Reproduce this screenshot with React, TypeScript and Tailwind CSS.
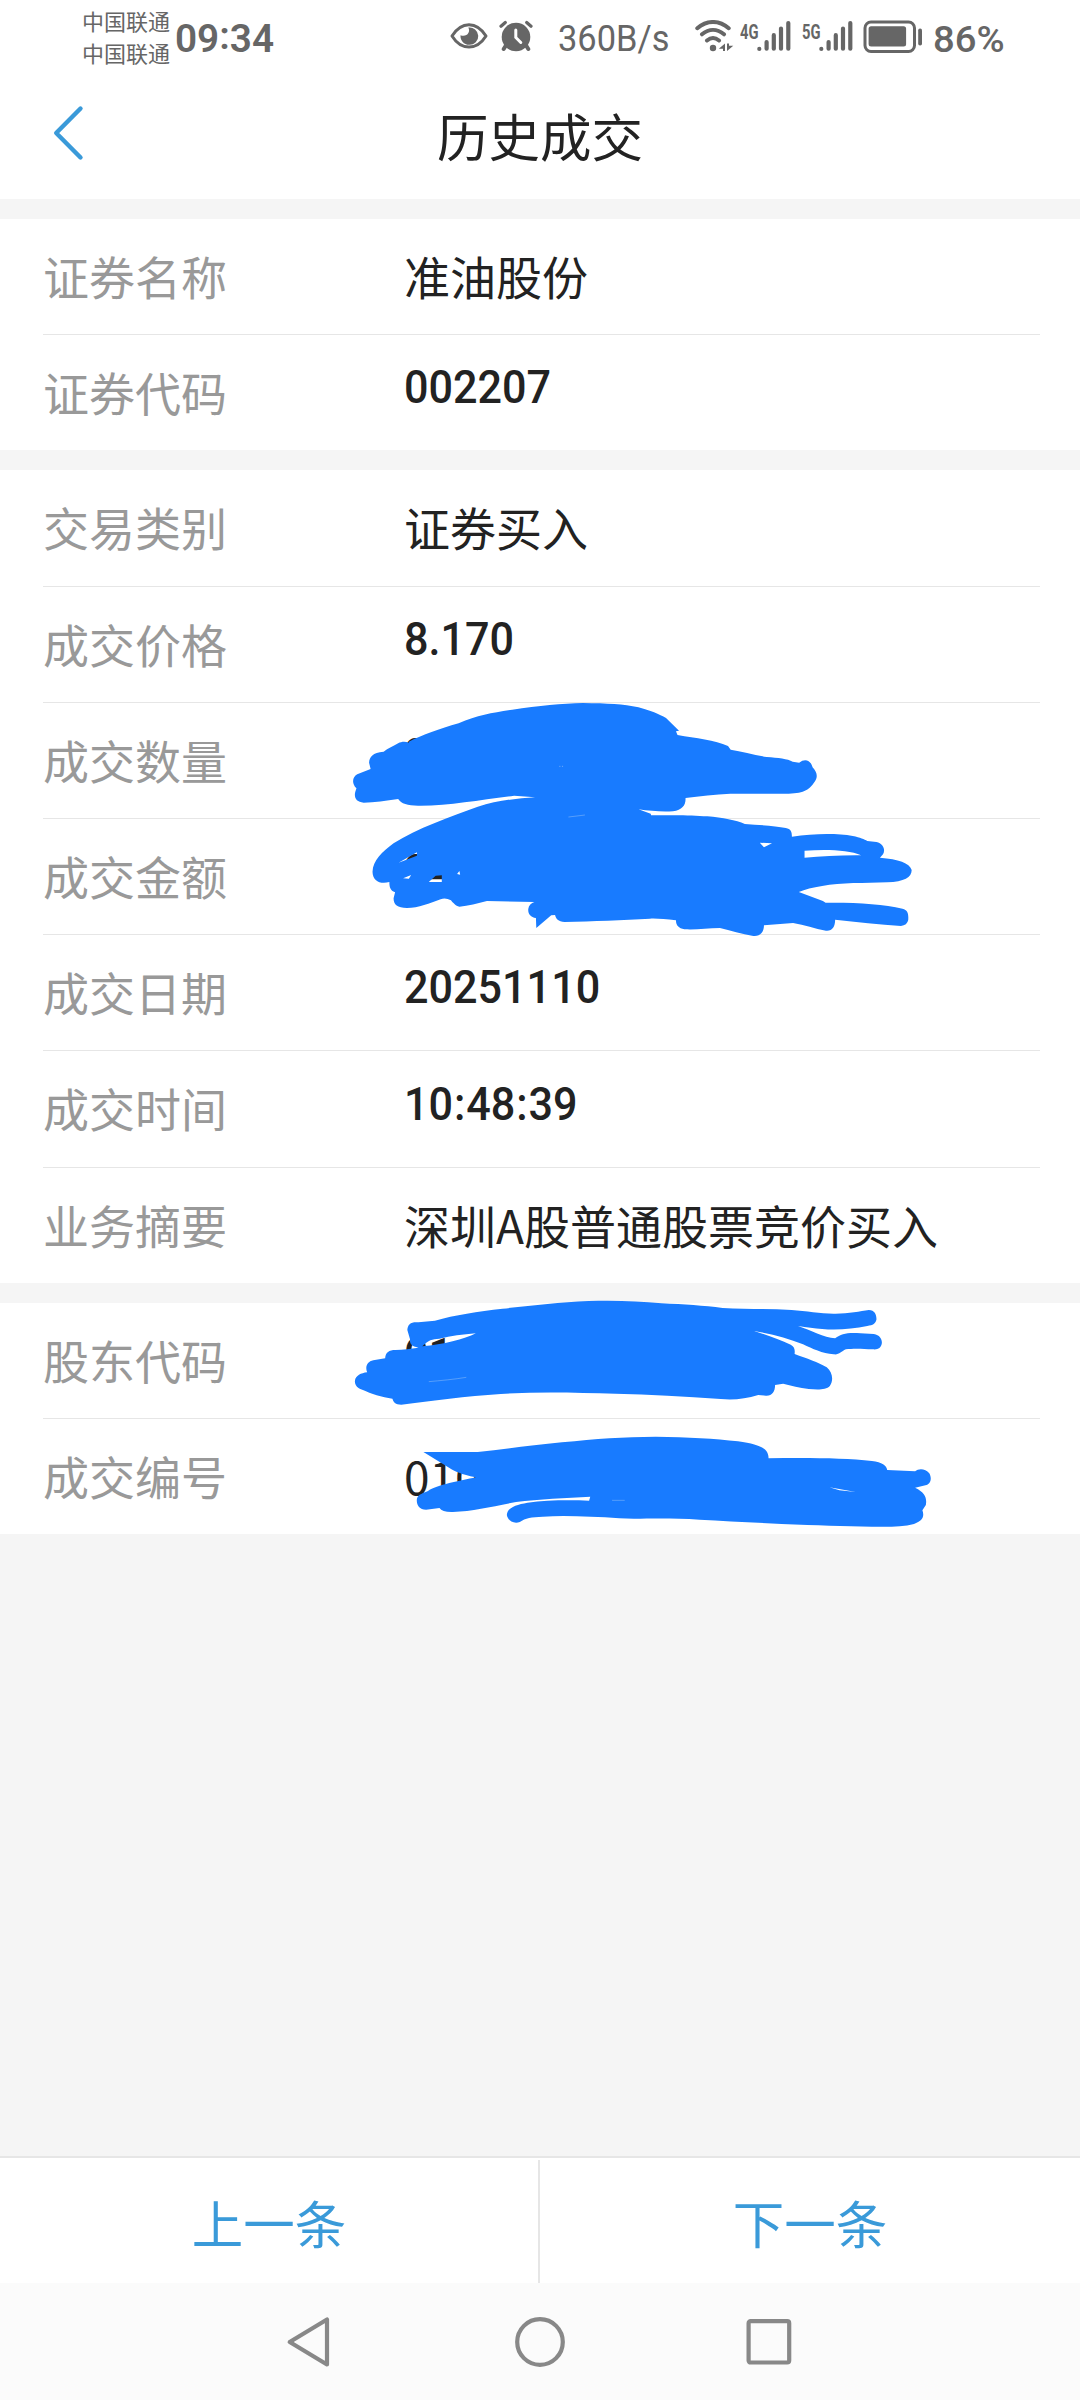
import type { ReactNode } from "react";

type RowData = {
  label: string;
  value: string;
  numeric?: boolean;
  height: string;
};

const security: RowData[] = [
  { label: "证券名称", value: "准油股份", height: "h-[116px]" },
  { label: "证券代码", value: "002207", numeric: true, height: "h-[115px]" },
];

const trade: RowData[] = [
  { label: "交易类别", value: "证券买入", height: "h-[117px]" },
  { label: "成交价格", value: "8.170", numeric: true, height: "h-[116px]" },
  { label: "成交数量", value: "2", numeric: true, height: "h-[116px]" },
  { label: "成交金额", value: "24", numeric: true, height: "h-[116px]" },
  { label: "成交日期", value: "20251110", numeric: true, height: "h-[116px]" },
  { label: "成交时间", value: "10:48:39", numeric: true, height: "h-[117px]" },
  { label: "业务摘要", value: "深圳A股普通股票竞价买入", height: "h-[115px]" },
];

const account: RowData[] = [
  { label: "股东代码", value: "01", numeric: true, height: "h-[116px]" },
  { label: "成交编号", value: "010", height: "h-[115px]" },
];

function Row({ row, last }: { row: RowData; last: boolean }) {
  return (
    <div
      className={`mr-[40px] ml-[43px] flex items-center pb-[4px] text-[46px] leading-none whitespace-nowrap ${row.height} ${
        last ? "" : "border-b border-[#e6e6e6]"
      }`}
    >
      <span className="w-[361px] shrink-0 text-[#999999]">{row.label}</span>
      {row.numeric ? (
        <span className="mb-[6px] inline-block origin-left scale-x-[0.93] font-[Roboto] text-[46.4px] font-medium text-[#222222]">
          {row.value.split(":").map((part, i) => (
            <span key={i}>
              {i > 0 && <span className="mx-[1px]">:</span>}
              {part}
            </span>
          ))}
        </span>
      ) : (
        <span className="text-[#222222]">{row.value}</span>
      )}
    </div>
  );
}

function Group({ rows }: { rows: RowData[] }) {
  return (
    <section className="bg-white">
      {rows.map((row, i) => (
        <Row key={row.label} row={row} last={i === rows.length - 1} />
      ))}
    </section>
  );
}

function SignalBars() {
  return (
    <svg className="h-[32px] w-[34px]" viewBox="0 0 34 32" stroke="#666" strokeWidth="4.2" strokeLinecap="round">
      <path d="M2.3 28.9v.01M9.6 22v6.7M16.8 15.2v13.5M24 8.6v20.1M31.3 3v25.7" />
    </svg>
  );
}

function Network({ name, children }: { name: string; children: ReactNode }) {
  return (
    <div className="flex h-[32px]">
      <span className="w-[17px]">
        <span className="inline-block origin-left scale-x-[0.72] font-[Roboto] text-[20.5px] leading-[15px] font-bold">
          {name}
        </span>
      </span>
      {children}
    </div>
  );
}

function StatusBar() {
  return (
    <header className="flex h-[80px] items-start text-[#666666]">
      <div className="ml-[82px] w-[93px] pt-[4px] text-[22px] leading-[32px] font-normal whitespace-nowrap">
        <div>中国联通</div>
        <div>中国联通</div>
      </div>
      <div className="w-[275px] pt-[15px]">
        <span className="inline-block origin-left scale-x-[0.98] font-[Roboto] text-[39.5px] leading-[48px] font-semibold">
          09<span className="relative -top-[3px]">:</span>34
        </span>
      </div>
      <svg className="mt-[20px] h-[32px] w-[38px]" viewBox="0 0 38 32" fill="none">
        <path d="M2 16C7 8 13 4.700 19 4.700S31 8 36 16C31 24 25 27 19 27S7 24 2 16Z" stroke="#666" strokeWidth="3" strokeLinejoin="round" />
        <path d="M18.300 7.500c2.600 4.500-1.500 10-7.800 7.700-.4 5.300 3.500 9.600 8.700 9.600a8.700 8.700 0 1 0-.9-17.300Z" fill="#666" />
      </svg>
      <svg className="mt-[20px] ml-[11px] h-[32px] w-[35px]" viewBox="0 0 35 32" fill="none">
        <path d="M7.500 24.500 4.700 29M26.500 24.500l2.800 4.500" stroke="#666" strokeWidth="4" strokeLinecap="round" />
        <circle cx="17" cy="17" r="14.300" fill="#666" />
        <path d="M2 6.200 6.300 2.500M32 6.200l-4.300-3.700" stroke="#666" strokeWidth="3.200" strokeLinecap="round" />
        <path d="M16.800 10v7.500l5 5" stroke="#fff" strokeWidth="3" strokeLinecap="round" />
      </svg>
      <div className="ml-[24px] w-[137px] pt-[15px]">
        <span className="inline-block origin-left scale-x-[0.93] font-[Roboto] text-[37px] leading-[48px] whitespace-nowrap">
          360B/s
        </span>
      </div>
      <svg className="mt-[20px] h-[32px] w-[39px]" viewBox="0 0 39 32" fill="none" stroke="#666" strokeLinecap="round">
        <path d="M2.300 8.200C12-.1 24-.1 33.700 8.200M7 14.300c7-5.800 15-5.800 22 0M12 20.500c4-3.300 8-3.300 12 0" strokeWidth="4" />
        <circle cx="18" cy="28" r="3.200" fill="#666" stroke="none" />
        <path d="M30 23.500v7.500h-2v-2.300h-4.200ZM32 31v-7.500H34v2.300h4.300Z" fill="#666" stroke="none" />
      </svg>
      <div className="mt-[20px] ml-[6px] flex gap-[11px]">
        <Network name="4G">
          <SignalBars />
        </Network>
        <Network name="5G">
          <SignalBars />
        </Network>
      </div>
      <svg className="mt-[20px] ml-[10px] h-[33px] w-[60px]" viewBox="0 0 60 33" fill="none">
        <rect x="2" y="2" width="49.500" height="29.500" rx="6" stroke="#666" strokeWidth="3" />
        <rect x="5.600" y="6.300" width="37.500" height="20.200" rx="2.500" fill="#666" />
        <rect x="55.200" y="8.500" width="3.800" height="17" rx="1.800" fill="#666" />
      </svg>
      <span className="ml-[10px] inline-block origin-left scale-x-[1.02] pt-[15px] font-[Roboto] text-[37.5px] leading-[48px] font-medium">
        86%
      </span>
    </header>
  );
}

/* Marker strokes drawn across the quantity and amount rows. */
function MarkerUpper() {
  return (
    <svg
      className="absolute top-[690px] left-[340px] h-[250px] w-[600px]"
      viewBox="0 0 1568 750"
      preserveAspectRatio="none"
      fill="#187bff"
      fillRule="evenodd"
    >
      <path d="M180 155C215 135 260 116 310 100C360 75 400 68 450 59C520 48 580 40 635 39C700 40 740 42 780 52C810 61 835 73 852 84L886 122L878 124L882 135C930 145 980 150 1014 168L1021 179C1050 185 1085 195 1115 201C1145 204 1170 206 1183 215L1200 218C1215 204 1230 210 1235 232C1248 248 1249 262 1240 276C1225 302 1210 311 1165 311L1020 311C980 314 940 318 903 324C904 345 895 360 870 364C840 366 810 363 780 358L812 371L813 376C880 375 920 375 960 379C1000 383 1035 391 1058 402C1100 405 1140 408 1165 414C1178 417 1181 425 1181 440C1240 430 1300 430 1340 438C1360 443 1370 448 1378 453L1402 456C1420 460 1426 480 1419 493L1411 503C1460 508 1488 518 1494 540C1494 562 1475 575 1430 577C1370 580 1310 577 1260 588C1235 592 1215 599 1199 606L1262 633L1269 638C1350 637 1420 642 1470 656C1484 661 1486 670 1485 690Q1482 706 1466 708C1410 704 1350 696 1294 689C1294 710 1286 724 1270 722C1240 716 1215 705 1184 699L1108 706C1108 727 1098 740 1080 738C1050 732 1020 722 993 714C960 715 930 720 900 718C885 715 878 707 878 691C850 688 830 685 810 686C740 691 660 693 587 696C570 695 564 686 562 675L552 676L513 714L512 684C498 681 491 672 492 657C493 646 500 639 508 636L384 633C360 640 335 648 312 650C302 648 295 638 290 631Q275 622 263 628C235 640 205 654 175 654C150 653 140 645 140 625L144 607C131 602 129 590 129 576C105 584 85 572 85 545C86 512 110 485 140 460C200 415 290 380 360 350C410 332 460 325 510 322L455 317C370 329 290 346 210 347C180 348 160 342 152 327C120 332 90 338 62 338C42 337 36 322 40 305L43 295C30 280 32 262 45 253L80 237L76 218C77 200 85 188 114 185C125 174 140 169 152 160C160 155 170 154 180 158ZM153 518L201 487V497ZM165 565L186 555L180 566ZM232 576L250 557L266 556V576ZM306 552L312 543L314 554ZM1097 458L1129 460L1108 472ZM1214 482C1270 478 1330 479 1362 496C1310 495 1260 500 1214 503Z" />
      <path d="M597 381Q620 378 640 375" fill="none" stroke="#8bbbf8" strokeWidth="1.500" />
      <path d="M573 229h3M580 229h3" fill="none" stroke="#8bbbf8" strokeWidth="2" />
    </svg>
  );
}

/* Marker strokes drawn across the shareholder code and deal number rows. */
function MarkerLower() {
  return (
    <svg
      className="absolute top-[1280px] left-[340px] h-[260px] w-[600px]"
      viewBox="0 0 1568 780"
      preserveAspectRatio="none"
      fill="#187bff"
      fillRule="evenodd"
    >
      <path d="M176 150C177 133 185 125 205 127L248 122C300 105 360 94 425 86C500 77 570 67 650 63C720 61 780 63 840 70C900 73 950 77 1000 84C1060 88 1120 86 1180 90C1220 93 1260 102 1295 101C1330 100 1360 94 1382 90C1397 90 1402 103 1402 118C1400 131 1393 136 1378 138C1340 146 1300 152 1260 147C1240 145 1220 142 1197 138C1230 150 1265 174 1294 175C1310 162 1325 157 1360 160L1395 162C1411 165 1417 178 1416 190C1414 205 1405 210 1392 208C1365 206 1340 205 1322 208C1309 215 1305 225 1290 223C1260 221 1235 206 1210 193C1170 174 1130 163 1083 153C1120 167 1150 180 1178 194C1189 201 1189 211 1188 222C1220 236 1250 246 1272 262C1288 277 1290 302 1280 318C1270 331 1245 329 1225 327C1200 324 1180 317 1158 311L1137 315C1137 335 1129 348 1113 347L1093 345C1060 356 1030 361 995 357C900 350 810 343 720 341C620 338 520 334 420 342C330 348 240 364 160 374C145 374 139 365 137 356C110 352 80 341 60 330C44 324 38 314 39 302C41 287 55 279 71 277C65 260 71 245 87 241L118 235C119 217 128 210 145 210C165 208 185 207 205 203C185 199 182 190 183 178ZM215 199C232 180 240 177 260 176C290 168 320 163 355 160C325 178 270 194 215 199Z" />
      <path d="M218 516L360 516C430 507 500 496 580 487C670 476 740 471 825 470C910 471 980 476 1040 484C1100 494 1120 506 1120 535C1220 533 1320 534 1390 543C1417 547 1428 556 1430 570L1503 574C1512 564 1530 565 1540 580C1548 596 1543 613 1530 616L1503 623C1530 638 1534 655 1531 675L1522 691C1528 710 1522 723 1500 732C1470 741 1430 741 1390 740C1250 738 1080 728 940 719C850 712 780 718 730 715C660 710 590 706 530 710C500 712 485 713 470 726C455 733 439 723 436 705C437 683 460 674 490 668C540 660 600 660 651 662L654 650C590 654 520 657 460 666C400 679 350 693 295 696Q267 697 260 684L225 689C206 689 199 673 201 656C204 643 218 639 230 633C252 615 315 602 355 592C315 582 302 575 285 563ZM1279 622L1348 636L1305 631Z" />
      <path d="M232 305C260 302 300 298 330 292M711 661h33" fill="none" stroke="#8bbbf8" strokeWidth="1.500" />
    </svg>
  );
}

export default function App() {
  return (
    <div className="relative flex h-[2400px] w-[1080px] flex-col overflow-hidden bg-[#f5f5f5] font-['Noto_Sans_CJK_SC',sans-serif]">
      <div className="h-[199px] shrink-0 bg-white">
        <StatusBar />
        <div className="grid h-[110px] grid-cols-[54px_1fr_54px] items-center">
          <svg className="-mt-[4px] ml-[51px] h-[56px] w-[34px]" viewBox="0 0 34 56" fill="none">
            <path d="M29.500 3.500 5.200 28l24.300 24.500" stroke="#3a9ad9" strokeWidth="4.400" strokeLinecap="round" strokeLinejoin="round" />
          </svg>
          <h1 className="text-center text-[51.5px] leading-none text-[#222222]">历史成交</h1>
        </div>
      </div>

      <main className="flex grow flex-col gap-[20px] pt-[20px]">
        <Group rows={security} />
        <Group rows={trade} />
        <Group rows={account} />
      </main>

      <div className="flex h-[127px] shrink-0 border-t-2 border-[#e6e6e6] bg-white text-[51.5px] leading-none text-[#3a9ad9]">
        <button className="mt-[2px] w-[540px] border-r-2 border-[#e6e6e6]">上一条</button>
        <button className="grow pt-[2px]">下一条</button>
      </div>

      <nav className="flex h-[117px] shrink-0 items-center bg-[#fbfbfb]">
        <svg className="ml-[285px] h-[54px] w-[48px]" viewBox="0 0 48 54" fill="none" stroke="#888" strokeWidth="4.200" strokeLinejoin="round">
          <path d="M42 4.500v45L4.700 27Z" />
        </svg>
        <svg className="ml-[180px] h-[54px] w-[54px]" viewBox="0 0 54 54" fill="none" stroke="#888" strokeWidth="4.200">
          <circle cx="27" cy="27" r="22.800" />
        </svg>
        <svg className="ml-[177px] h-[50px] w-[50px]" viewBox="0 0 50 50" fill="none" stroke="#888" strokeWidth="4.200">
          <rect x="4.600" y="4.200" width="40.600" height="41.300" rx="2" />
        </svg>
      </nav>

      <MarkerUpper />
      <MarkerLower />
    </div>
  );
}
